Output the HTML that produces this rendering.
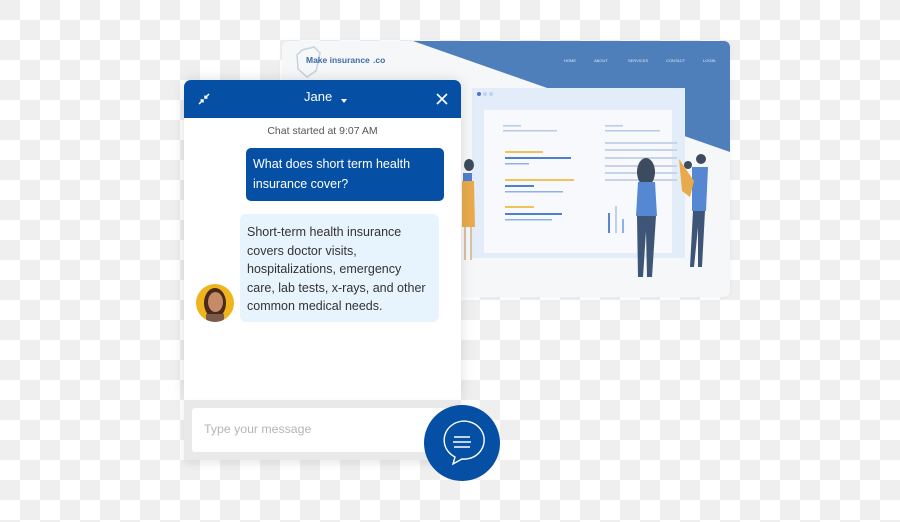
<!DOCTYPE html>
<html><head><style>
body{margin:0;width:900px;height:522px;overflow:hidden;position:relative;font-family:"Liberation Sans",sans-serif;
background-color:#fff;background-image:conic-gradient(#fff 25%,#efefef 25% 50%,#fff 50% 75%,#efefef 75%);background-size:40px 40px;}
.a{position:absolute}
</style></head><body>
<div class="a" style="left:282px;top:41px;width:448px;height:256px;background:#f6f7f9;border-radius:6px;overflow:hidden;box-shadow:0 0 6px rgba(0,0,0,.05)">
<svg width="448" height="256" style="position:absolute;left:0;top:0">
<polygon points="131,0 448,0 448,111" fill="#4f7fba"/>
<path d="M20 9 L32 6 L38 12 L34 30 L25 36 L16 28 L15 14Z" fill="none" stroke="#c8d2de" stroke-width="1.5"/>
<text x="24" y="22" font-size="8.5" font-weight="bold" fill="#3e6aa7" font-family="Liberation Sans">Make insurance</text>
<text x="91" y="22" font-size="8.5" font-weight="bold" fill="#3e6aa7" font-family="Liberation Sans">.co</text>
<g font-size="4" fill="#dfe8f3" font-family="Liberation Sans"><text x="282" y="21">HOME</text><text x="312" y="21">ABOUT</text><text x="346" y="21">SERVICES</text><text x="384" y="21">CONTACT</text><text x="421" y="21">LOGIN</text></g>
<rect x="190" y="47" width="213" height="170" fill="#e3edf9"/>
<circle cx="197" cy="53" r="2" fill="#4a78c4"/><circle cx="203" cy="53" r="2" fill="#c0d3ee"/><circle cx="209" cy="53" r="2" fill="#c0d3ee"/>
<rect x="202" y="69" width="188" height="143" fill="#f7f9fc"/>
<rect x="221" y="84" width="18" height="1.5" fill="#b7cbe6"/><rect x="221" y="89" width="54" height="1.5" fill="#b7cbe6"/>
<rect x="323" y="84" width="18" height="1.5" fill="#b7cbe6"/><rect x="323" y="89" width="55" height="1.5" fill="#b7cbe6"/>
<rect x="223" y="110" width="38" height="2" fill="#efc25d"/><rect x="223" y="116" width="66" height="2" fill="#4f7fcf"/><rect x="223" y="122" width="24" height="1.5" fill="#8fb1e4"/>
<rect x="223" y="138" width="69" height="2" fill="#efc25d"/><rect x="223" y="144" width="29" height="2" fill="#4f7fcf"/><rect x="223" y="150" width="58" height="1.5" fill="#8fb1e4"/>
<rect x="223" y="165" width="29" height="2" fill="#efc25d"/><rect x="223" y="172" width="57" height="2" fill="#4f7fcf"/><rect x="223" y="178" width="47" height="1.5" fill="#8fb1e4"/>
<g fill="#c6d4ea"><rect x="323" y="101" width="72" height="2"/><rect x="323" y="108" width="72" height="2"/><rect x="323" y="116" width="72" height="2"/><rect x="323" y="124" width="72" height="2"/><rect x="323" y="131" width="72" height="2"/><rect x="323" y="138" width="72" height="2"/></g>
<rect x="326" y="172" width="2" height="20" fill="#5a86d0"/><rect x="333" y="165" width="2" height="27" fill="#bdd1ee"/><rect x="340" y="178" width="2" height="14" fill="#8fb1e4"/>
<ellipse cx="187" cy="124" rx="5" ry="6" fill="#3d4b5e"/>
<rect x="181" y="132" width="9" height="16" fill="#4f7fcf"/>
<path d="M180 140 L192 140 L193 186 L180 186Z" fill="#e9aa4c"/>
<rect x="182" y="186" width="2" height="33" fill="#d8c1a8"/><rect x="188" y="186" width="2" height="33" fill="#d8c1a8"/>
<ellipse cx="364" cy="131" rx="9" ry="14" fill="#3d4b5e"/>
<path d="M356 141 L373 141 L375 175 L354 175Z" fill="#5687d2"/>
<path d="M355 175 L374 175 L370 236 L365 236 L364 190 L361 236 L356 236Z" fill="#3e5577"/>
<circle cx="419" cy="118" r="5" fill="#3d4b5e"/>
<path d="M410 126 L426 126 L424 170 L410 170Z" fill="#5687d2"/>
<path d="M397 118 L412 140 L408 156 L400 150Z" fill="#e9aa4c"/>
<circle cx="406" cy="124" r="4" fill="#3d4b5e"/>
<path d="M411 170 L423 170 L420 226 L416 226 L416 186 L412 226 L408 226Z" fill="#3e5577"/>
</svg>
</div>
<div class="a" style="left:184px;top:80px;width:277px;height:320px;background:#fff;border-radius:7px 7px 0 0;box-shadow:0 0 14px rgba(0,0,0,.12);overflow:hidden">
<div style="height:38px;background:#0550a5;color:#fff;position:relative">
<svg class="a" style="left:14px;top:13px" width="12" height="12" viewBox="0 0 12 12" stroke="#fff" stroke-width="1.5" fill="none"><path d="M1 11 L5 7 M2.5 7 H5 V9.5 M11 1 L7 5 M7 2.5 V5 H9.5"/></svg>
<div class="a" style="left:120px;top:9px;font-size:13px">Jane</div>
<div class="a" style="left:157px;top:19px;width:0;height:0;border-left:3.5px solid transparent;border-right:3.5px solid transparent;border-top:4px solid #fff"></div>
<svg class="a" style="left:252px;top:13px" width="12" height="12" stroke="#fff" stroke-width="1.7"><path d="M1 1 L11 11 M11 1 L1 11"/></svg>
</div>
<div class="a" style="left:0;width:277px;top:45px;text-align:center;font-size:10.5px;color:#555">Chat started at 9:07 AM</div>
<div class="a" style="left:62px;top:68px;width:198px;height:53px;background:#0550a5;border-radius:5px;color:#fff;font-size:12.5px;line-height:20px;padding:6px 0 0 7px;box-sizing:border-box">What does short term health<br>insurance cover?</div>
<div class="a" style="left:56px;top:134px;width:199px;height:108px;background:#e7f3fd;border-radius:6px;color:#333;font-size:12.5px;line-height:18.5px;padding:9px 0 0 7px;box-sizing:border-box;white-space:nowrap">Short-term health insurance<br>covers doctor visits,<br>hospitalizations, emergency<br>care, lab tests, x-rays, and other<br>common medical needs.</div>
<div class="a" style="left:12px;top:204px;width:38px;height:38px;border-radius:50%;background:#f0b41e;overflow:hidden">
<div class="a" style="left:8px;top:4px;width:22px;height:30px;border-radius:50%;background:#4a2a1c"></div>
<div class="a" style="left:12px;top:8px;width:15px;height:20px;border-radius:50%;background:#c48b66"></div>
<div class="a" style="left:10px;top:30px;width:18px;height:10px;background:#7a5a4a"></div>
</div>
</div>
<div class="a" style="left:184px;top:400px;width:277px;height:60px;background:#e9e9e9;box-shadow:0 4px 8px rgba(0,0,0,.08)"></div>
<div class="a" style="left:192px;top:408px;width:270px;height:44px;background:#fff;border-radius:3px"></div>
<div class="a" style="left:204px;top:422px;font-size:12.3px;color:#b5b5b5">Type your message</div>
<div class="a" style="left:424px;top:405px;width:76px;height:76px;border-radius:50%;background:#0550a5"></div>
<svg class="a" style="left:424px;top:405px" width="76" height="76" fill="none" stroke="#fff" stroke-width="1.4"><path d="M31 52 L29 59 L38 54 A20 19 0 1 0 31 52 Z"/><path d="M30 32 H46 M29 37 H47 M30 42 H46"/></svg>
</body></html>
